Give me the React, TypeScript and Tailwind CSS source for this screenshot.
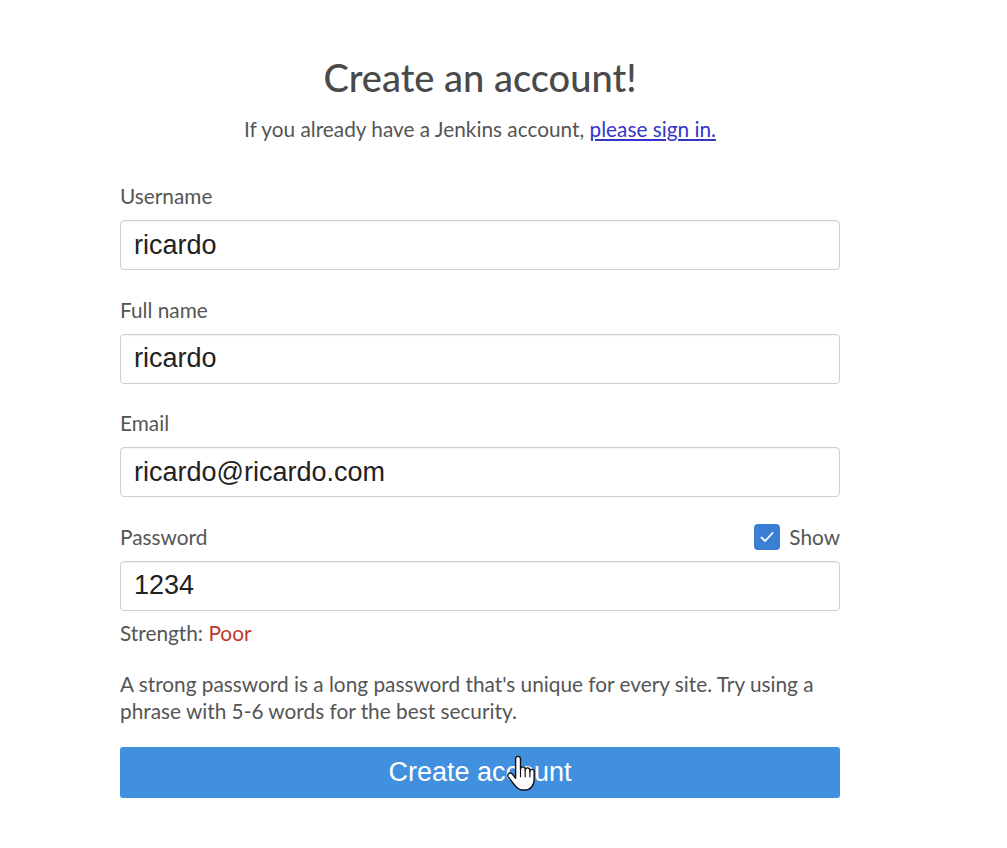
const lato = "font-['Lato','Noto_Sans',sans-serif]";
const arial = "font-['Liberation_Sans','Arial',sans-serif]";

function Field({ label, value, right }: { label: string; value: string; right?: React.ReactNode }) {
  return (
    <div className="flex flex-col">
      <div className="flex h-[26px] items-center justify-between">
        <span className={`${lato} text-[20.8px] leading-[26px] text-[#555]`}>{label}</span>
        {right}
      </div>
      <div className="mt-[11px] flex h-[50px] items-center rounded-[4px] border border-[#cfcfcf] bg-white px-[13px] shadow-[inset_0_1px_2px_rgba(0,0,0,0.06)]">
        <span className={`${arial} text-[27px] text-[#222]`}>{value}</span>
      </div>
    </div>
  );
}

function ShowToggle() {
  return (
    <label className="flex items-center gap-[9px]">
      <span className="flex h-[26px] w-[26px] items-center justify-center rounded-[4px] bg-[#3b7fd4]">
        <svg width="16" height="16" viewBox="0 0 16 16" fill="none">
          <path d="M2.5 8.5 L6.2 12 L13.5 4" stroke="white" strokeWidth="1.8" strokeLinecap="round" strokeLinejoin="round" />
        </svg>
      </span>
      <span className={`${lato} text-[20.8px] leading-[26px] text-[#555]`}>Show</span>
    </label>
  );
}

function HandCursor() {
  return (
    <svg className="absolute left-[386px] top-[8px]" width="32" height="39" viewBox="0 0 30 36">
      <path
        d="M9 3.5c0-1.5 1-2.5 2.3-2.5s2.3 1 2.3 2.5v9.5c0-1.3 1-2.2 2.2-2.2s2.2.9 2.2 2.2v1c0-1.3 1-2.2 2.2-2.2s2.2.9 2.2 2.2v1.2c0-1.2 1-2 2-2s2 .8 2 2v7.5c0 5.5-3.5 9.8-8.5 9.8h-2.5c-3.2 0-5.3-1.6-7-4.2L2.2 20.5c-.9-1.3-.6-2.8.6-3.5 1.2-.7 2.5-.3 3.4.9L9 21.5z"
        fill="white"
        stroke="#111"
        strokeWidth="1.3"
        strokeLinejoin="round"
      />
      <path d="M13.6 13v7M18 14v6M22.4 15.2v5" stroke="#111" strokeWidth="1.1" strokeLinecap="round" />
    </svg>
  );
}

export default function App() {
  return (
    <div className="min-h-screen bg-white">
      <div className="ml-[120px] flex w-[720px] flex-col pt-[54px]">
        <h1 className={`${lato} text-center text-[38px] font-medium leading-[46px] text-[#4a4a4a]`}>Create an account!</h1>
        <p className={`${lato} mt-[16px] text-center text-[20.8px] leading-[26px] text-[#555]`}>
          If you already have a Jenkins account,{" "}
          <a href="#" className="text-[#3535c8] underline">
            please sign in.
          </a>
        </p>

        <div className="mt-[41px] flex flex-col gap-[26.5px]">
          <Field label="Username" value="ricardo" />
          <Field label="Full name" value="ricardo" />
          <Field label="Email" value="ricardo@ricardo.com" />
          <Field label="Password" value="1234" right={<ShowToggle />} />
        </div>

        <p className={`${lato} mt-[10px] text-[20.8px] leading-6 text-[#555]`}>
          Strength: <span className="text-[#c0392b]">Poor</span>
        </p>

        <p className={`${lato} mt-[25px] text-[20.8px] leading-[27px] text-[#555]`}>
          A strong password is a long password that's unique for every site. Try using a phrase with 5-6 words for the best security.
        </p>

        <button className="relative mt-[23px] flex h-[51px] items-center justify-center rounded-[3px] bg-[#4190e0]">
          <span className={`${arial} text-[27px] text-white`}>Create account</span>
          <HandCursor />
        </button>
      </div>
    </div>
  );
}
